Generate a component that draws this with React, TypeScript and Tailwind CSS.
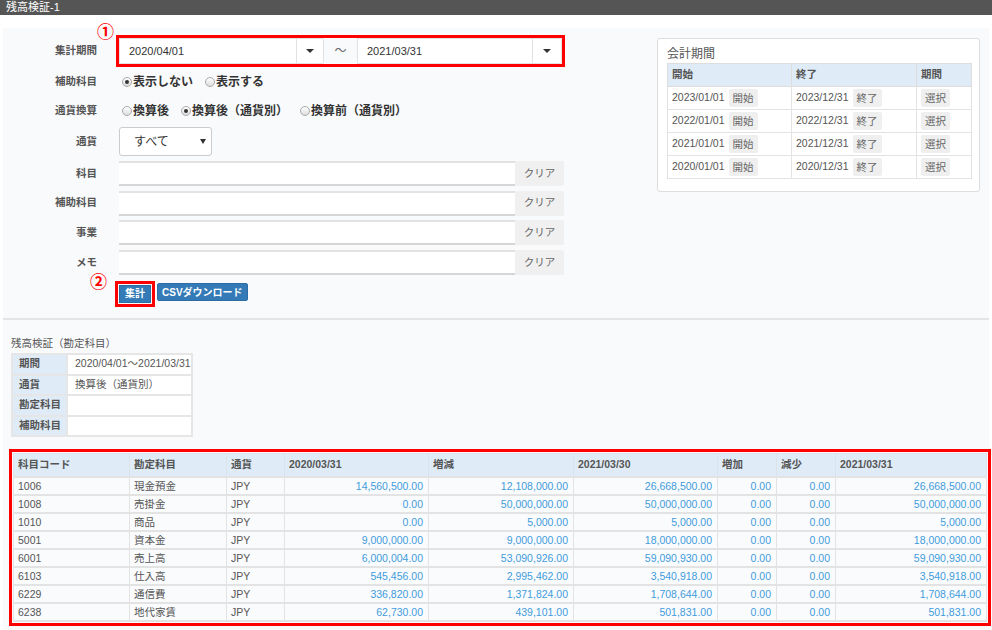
const font = "font-['Liberation_Sans','Noto_Sans_CJK_JP',sans-serif]";

function Caret() {
  return <span className="inline-block w-0 h-0 border-l-[4px] border-r-[4px] border-t-[4px] border-l-transparent border-r-transparent border-t-[#333]" />;
}

function Radio({ checked, label }: { checked?: boolean; label: string }) {
  return (
    <span className="inline-flex items-center mr-[12px]">
      <span className="w-[10px] h-[10px] rounded-full border border-[#aaa] bg-gradient-to-b from-[#fff] to-[#ddd] flex items-center justify-center mr-[1px]">
        {checked && <span className="w-[4px] h-[4px] rounded-full bg-[#333]" />}
      </span>
      <span className="text-[12px] font-bold text-[#333]">{label}</span>
    </span>
  );
}

function Label({ children }: { children: React.ReactNode }) {
  return <div className="w-[94px] text-right text-[10.5px] font-bold text-[#555] shrink-0">{children}</div>;
}

function TextRow({ label }: { label: string }) {
  return (
    <div className="flex items-center h-[25px]">
      <Label>{label}</Label>
      <div className="ml-[22px] flex h-[25px]">
        <div className="w-[396px] bg-white border-t-2 border-b-2 border-t-[#e2e2e2] border-b-[#d6d6d6]" />
        <div className="w-[49px] bg-[#f0f0f0] rounded-r-[2px] flex items-center justify-center text-[10.5px] text-[#666]">クリア</div>
      </div>
    </div>
  );
}

const periods = [
  ['2023/01/01', '2023/12/31'],
  ['2022/01/01', '2022/12/31'],
  ['2021/01/01', '2021/12/31'],
  ['2020/01/01', '2020/12/31'],
];

const rows = [
  ['1006', '現金預金', 'JPY', '14,560,500.00', '12,108,000.00', '26,668,500.00', '0.00', '0.00', '26,668,500.00'],
  ['1008', '売掛金', 'JPY', '0.00', '50,000,000.00', '50,000,000.00', '0.00', '0.00', '50,000,000.00'],
  ['1010', '商品', 'JPY', '0.00', '5,000.00', '5,000.00', '0.00', '0.00', '5,000.00'],
  ['5001', '資本金', 'JPY', '9,000,000.00', '9,000,000.00', '18,000,000.00', '0.00', '0.00', '18,000,000.00'],
  ['6001', '売上高', 'JPY', '6,000,004.00', '53,090,926.00', '59,090,930.00', '0.00', '0.00', '59,090,930.00'],
  ['6103', '仕入高', 'JPY', '545,456.00', '2,995,462.00', '3,540,918.00', '0.00', '0.00', '3,540,918.00'],
  ['6229', '通信費', 'JPY', '336,820.00', '1,371,824.00', '1,708,644.00', '0.00', '0.00', '1,708,644.00'],
  ['6238', '地代家賃', 'JPY', '62,730.00', '439,101.00', '501,831.00', '0.00', '0.00', '501,831.00'],
];

const headers = ['科目コード', '勘定科目', '通貨', '2020/03/31', '増減', '2021/03/30', '増加', '減少', '2021/03/31'];
const widths = [116, 97, 58, 144, 145, 144, 59, 59, 151];

export default function App() {
  return (
    <div className={`${font} w-[992px] h-[630px] bg-white overflow-hidden`}>
      {/* title bar */}
      <div className="h-[15px] bg-[#555] text-white text-[11px] leading-[15px] pl-[6px]">残高検証-1</div>

      <div className="mt-[13px] mx-[3px] bg-[#f9fafc] h-[602px]">
        {/* search form */}
        <div className="flex justify-between h-[290px]">
          <div className="pt-[10px]">
            <div className="flex items-center h-[26px]">
              <Label>集計期間</Label>
              <div className="ml-[22px] relative flex h-[26px] outline outline-[3px] outline-[#f00]">
                <span className="absolute left-[-22px] top-[-14px] text-[#f00] text-[17px] font-bold leading-none">①</span>
                <div className="w-[178px] bg-white border border-[#e2e2e2] flex items-center pl-[9px] text-[11px] text-[#333]">2020/04/01</div>
                <div className="w-[27px] bg-white border border-l-0 border-[#e2e2e2] rounded-r-[2px] flex items-center justify-center"><Caret /></div>
                <div className="w-[33px] flex items-center justify-center text-[12px] text-[#666]">～</div>
                <div className="w-[176px] bg-white border border-[#e2e2e2] flex items-center pl-[9px] text-[11px] text-[#333]">2021/03/31</div>
                <div className="w-[29px] bg-white border border-l-0 border-[#e2e2e2] rounded-r-[2px] flex items-center justify-center"><Caret /></div>
              </div>
            </div>

            <div className="flex items-center h-[20px] mt-[8px]">
              <Label>補助科目</Label>
              <div className="ml-[25px] flex items-center">
                <Radio checked label="表示しない" />
                <Radio label="表示する" />
              </div>
            </div>

            <div className="flex items-center h-[20px] mt-[9px]">
              <Label>通貨換算</Label>
              <div className="ml-[25px] flex items-center">
                <Radio label="換算後" />
                <Radio checked label="換算後（通貨別）" />
                <Radio label="換算前（通貨別）" />
              </div>
            </div>

            <div className="flex items-center h-[29px] mt-[6px]">
              <Label>通貨</Label>
              <div className="ml-[22px] w-[93px] h-[29px] bg-white border border-[#ccc] rounded-[3px] flex items-center justify-between pl-[14px] pr-[5px]">
                <span className="text-[12px] text-[#333]">すべて</span>
                <span className="inline-block w-0 h-0 border-l-[3px] border-r-[3px] border-t-[5px] border-l-transparent border-r-transparent border-t-[#333]" />
              </div>
            </div>

            <div className="mt-[5px] flex flex-col gap-[4.7px]">
              <TextRow label="科目" />
              <TextRow label="補助科目" />
              <TextRow label="事業" />
              <TextRow label="メモ" />
            </div>

            <div className="flex items-center mt-[5px] ml-[116px] gap-[6px]">
              <div className="relative">
                <span className="absolute left-[-29px] top-[-6px] text-[#f00] text-[17px] font-bold leading-none">②</span>
                <button className="h-[18px] px-[5px] bg-[#337ab7] border border-[#2e6da4] text-white text-[10px] font-bold outline outline-[3px] outline-offset-[1px] outline-[#f00]">集計</button>
              </div>
              <button className="h-[18px] px-[4px] bg-[#337ab7] border border-[#2e6da4] rounded-[2px] text-white text-[10px] font-bold">CSVダウンロード</button>
            </div>
          </div>

          {/* period card */}
          <div className="mt-[10px] mr-[9px] w-[323px] h-[154px] bg-white border border-[#ddd] rounded-[3px] pl-[9px] pt-[7px]">
            <div className="text-[12px] text-[#555] leading-[16px] mb-[1px]">会計期間</div>
            <table className="table-fixed border-collapse w-[304px] text-[10.5px] text-[#555]">
              <colgroup>
                <col className="w-[124px]" />
                <col className="w-[125px]" />
                <col className="w-[55px]" />
              </colgroup>
              <thead>
                <tr className="h-[23px] bg-[#dfecf8] font-bold">
                  <th className="border border-[#ddd] text-left pl-[4px]">開始</th>
                  <th className="border border-[#ddd] text-left pl-[4px]">終了</th>
                  <th className="border border-[#ddd] text-left pl-[4px]">期間</th>
                </tr>
              </thead>
              <tbody>
                {periods.map(([s, e]) => (
                  <tr key={s} className="h-[23px]">
                    <td className="border border-[#e3e3e3] pl-[4px]">
                      {s}<span className="inline-block ml-[4px] px-[4px] h-[18px] leading-[18px] bg-[#efefef] rounded-[2px] text-[#666] align-middle">開始</span>
                    </td>
                    <td className="border border-[#e3e3e3] pl-[4px]">
                      {e}<span className="inline-block ml-[4px] px-[4px] h-[18px] leading-[18px] bg-[#efefef] rounded-[2px] text-[#666] align-middle">終了</span>
                    </td>
                    <td className="border border-[#e3e3e3] pl-[4px]">
                      <span className="inline-block px-[4px] h-[18px] leading-[18px] bg-[#efefef] rounded-[2px] text-[#666] align-middle">選択</span>
                    </td>
                  </tr>
                ))}
              </tbody>
            </table>
          </div>
        </div>

        <div className="h-[2px] bg-[#e4e4e4]" />

        {/* results */}
        <div className="pl-[8px] pt-[16px]">
          <div className="text-[10.5px] text-[#555] leading-[14px] mb-[3px]">残高検証（勘定科目）</div>
          <table className="table-fixed border-collapse w-[180px] text-[10.5px] text-[#555]">
            <colgroup>
              <col className="w-[55px]" />
              <col className="w-[125px]" />
            </colgroup>
            <tbody>
              {[['期間', '2020/04/01～2021/03/31'], ['通貨', '換算後（通貨別）'], ['勘定科目', ''], ['補助科目', '']].map(([k, v]) => (
                <tr key={k} className="h-[20.5px]">
                  <td className="border-2 border-[#e6e6e6] bg-[#dfecf8] font-bold pl-[6px]">{k}</td>
                  <td className="border-2 border-[#e6e6e6] bg-white pl-[7px]">{v}</td>
                </tr>
              ))}
            </tbody>
          </table>

          <table className="mt-[16px] ml-[2px] table-fixed border-collapse w-[973px] text-[10.5px] text-[#555] outline outline-[3px] outline-offset-[1px] outline-[#f00]">
            <colgroup>
              {widths.map((w, i) => (
                <col key={i} style={{ width: w }} />
              ))}
            </colgroup>
            <thead>
              <tr className="h-[23px] bg-[#dfecf8]">
                {headers.map((h) => (
                  <th key={h} className="border border-[#dde3ea] text-left font-bold pl-[4px]">{h}</th>
                ))}
              </tr>
            </thead>
            <tbody>
              {rows.map((r) => (
                <tr key={r[0]} className="h-[18px] bg-[#fafbfd]">
                  {r.map((c, i) => (
                    <td
                      key={i}
                      className={
                        i < 3
                          ? 'border-y-2 border-x border-[#e3e3e3] pl-[4px] leading-[14px]'
                          : 'border-y-2 border-x border-[#e3e3e3] pr-[5px] text-right text-[#3f9bdc] leading-[14px]'
                      }
                    >
                      {c}
                    </td>
                  ))}
                </tr>
              ))}
            </tbody>
          </table>
        </div>
      </div>
    </div>
  );
}
